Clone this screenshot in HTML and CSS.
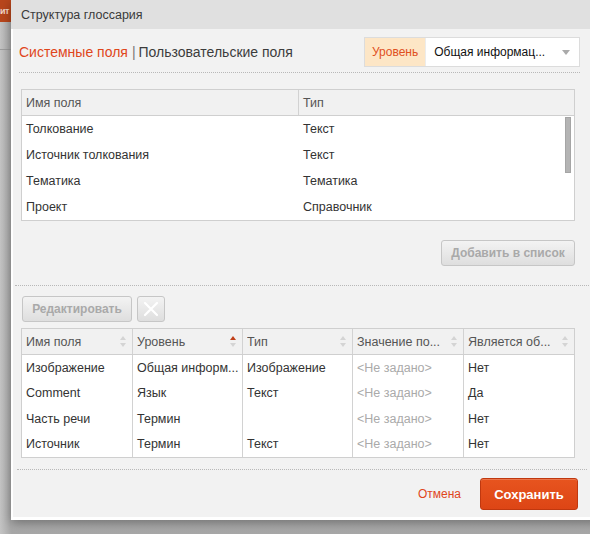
FILE: index.html
```html
<!DOCTYPE html>
<html lang="ru">
<head>
<meta charset="utf-8">
<title>Структура глоссария</title>
<link rel="stylesheet" href="styles.css">
</head>
<body>
<div class="app">
  <div class="app-bar"><span>ит</span></div>
  <div class="app-line"></div>
</div>

<div class="dialog">
  <div class="dialog-title">Структура глоссария</div>
  <div class="dialog-body">
    <div class="top-row">
      <div class="tabs">
        <span class="tab active">Системные поля</span><span class="sep">|</span><span class="tab">Пользовательские поля</span>
      </div>
      <div class="select">
        <span class="select-label">Уровень</span>
        <span class="select-value">Общая информац...</span>
        <span class="select-arrow"></span>
      </div>
    </div>

    <div class="grid grid-sys">
      <div class="grid-head">
        <div class="hcell c-name1">Имя поля</div>
        <div class="hcell c-type1">Тип</div>
      </div>
      <div class="grid-rows">
        <div class="row"><div class="cell c-name1">Толкование</div><div class="cell c-type1">Текст</div></div>
        <div class="row"><div class="cell c-name1">Источник толкования</div><div class="cell c-type1">Текст</div></div>
        <div class="row"><div class="cell c-name1">Тематика</div><div class="cell c-type1">Тематика</div></div>
        <div class="row"><div class="cell c-name1">Проект</div><div class="cell c-type1">Справочник</div></div>
        <div class="scrollbar"></div>
      </div>
    </div>

    <div class="add-row">
      <button class="btn btn-disabled">Добавить в список</button>
    </div>

    <div class="divider"></div>

    <div class="toolbar">
      <button class="btn btn-disabled btn-edit">Редактировать</button>
      <button class="btn btn-disabled btn-icon">
        <svg width="16" height="16" viewBox="0 0 16 16"><path d="M2 2 L14 14 M14 2 L2 14" stroke="#fff" stroke-width="2.2" stroke-linecap="round"/></svg>
      </button>
    </div>

    <div class="grid grid-user">
      <div class="grid-head">
        <div class="hcell"><span class="htext">Имя поля</span><span class="sort"></span></div>
        <div class="hcell"><span class="htext">Уровень</span><span class="sort asc"></span></div>
        <div class="hcell"><span class="htext">Тип</span><span class="sort"></span></div>
        <div class="hcell"><span class="htext">Значение по...</span><span class="sort"></span></div>
        <div class="hcell"><span class="htext">Является об...</span><span class="sort"></span></div>
      </div>
      <div class="grid-rows">
        <div class="row"><div class="cell">Изображение</div><div class="cell">Общая информ...</div><div class="cell">Изображение</div><div class="cell muted">&lt;Не задано&gt;</div><div class="cell">Нет</div></div>
        <div class="row"><div class="cell">Comment</div><div class="cell">Язык</div><div class="cell">Текст</div><div class="cell muted">&lt;Не задано&gt;</div><div class="cell">Да</div></div>
        <div class="row"><div class="cell">Часть речи</div><div class="cell">Термин</div><div class="cell"></div><div class="cell muted">&lt;Не задано&gt;</div><div class="cell">Нет</div></div>
        <div class="row"><div class="cell">Источник</div><div class="cell">Термин</div><div class="cell">Текст</div><div class="cell muted">&lt;Не задано&gt;</div><div class="cell">Нет</div></div>
      </div>
    </div>

    <div class="divider divider-bottom"></div>

    <div class="footer">
      <a class="link-cancel">Отмена</a>
      <button class="btn btn-primary">Сохранить</button>
    </div>
  </div>
</div>
</body>
</html>
```

FILE: styles.css
```css
* { box-sizing: border-box; }

html, body {
  margin: 0;
  padding: 0;
}

body {
  width: 590px;
  height: 534px;
  overflow: hidden;
  position: relative;
  background: linear-gradient(to bottom, #b9b9b9 0, #bdbdbd 480px, #a7a7a7 534px);
  font-family: "Liberation Sans", Arial, sans-serif;
  color: #333;
}

.app {
  width: 11px;
  height: 534px;
  background: linear-gradient(to right, #c4c4c4, #a9a9a9);
}

.app-bar {
  height: 22px;
  background: #b8461c;
  color: #f3d7c8;
  font-size: 9px;
  font-weight: bold;
  letter-spacing: -0.5px;
  overflow: hidden;
  display: flex;
  justify-content: flex-start;
  align-items: center;
  white-space: nowrap;
}

.app-line {
  height: 28px;
  border-bottom: 1px solid #9c9c9c;
}

/* Modal dialog floating over the page */
.dialog {
  position: absolute;
  left: 11px;
  top: 0;
  width: 590px;
  height: 520px;
  background: #fff;
  box-shadow: 0 3px 10px rgba(0, 0, 0, 0.35);
  display: flex;
  flex-direction: column;
}

.dialog-title {
  height: 29px;
  background: #e0e0e0;
  padding: 0 10px;
  font-size: 12.5px;
  line-height: 30px;
  color: #3a3a3a;
}

.dialog-body {
  flex: 1;
  margin: 0 0 3px 2px;
  background: #f2f2f2;
  padding: 0 0 0 6px;
}

/* Top row: tabs + level select */
.top-row {
  width: 561px;
  display: flex;
  justify-content: space-between;
  align-items: center;
  padding: 8px 0 5px;
  border-bottom: 1px dotted #b8b8b8;
}

.tabs {
  font-size: 14px;
  color: #3c3c3c;
  padding-bottom: 1px;
}

.tab.active { color: #e0461c; }

.sep {
  color: #777;
  margin: 0 3px 0 4px;
}

.select {
  display: flex;
  height: 30px;
  width: 216px;
  border: 1px solid #dcdcdc;
  background: #fff;
  font-size: 12px;
  align-items: stretch;
}

.select-label {
  background: #fde6c6;
  color: #e0501e;
  padding: 0 7px;
  display: flex;
  align-items: center;
  border-right: 1px solid #ececec;
}

.select-value {
  flex: 1;
  color: #111;
  display: flex;
  align-items: center;
  padding-left: 8px;
}

.select-arrow {
  width: 24px;
  position: relative;
}

.select-arrow::after {
  content: "";
  position: absolute;
  left: 7px;
  top: 12px;
  border-left: 4px solid transparent;
  border-right: 4px solid transparent;
  border-top: 5px solid #aaa;
}

/* Grids */
.grid {
  margin-left: 2px;
  width: 554px;
  border: 1px solid #cfcfcf;
  background: #fff;
  font-size: 12.5px;
}

.grid-sys { margin-top: 16px; }

.grid-head {
  display: flex;
  height: 26px;
  background: #f1f1f1;
  border-bottom: 1px solid #cfcfcf;
  color: #555;
}

.hcell {
  display: flex;
  align-items: center;
  padding: 0 4px;
  border-right: 1px solid #d2d2d2;
}

.hcell:last-child { border-right: 0; }

.grid-rows {
  position: relative;
}

.row {
  display: flex;
  height: 26px;
}

.cell {
  display: flex;
  align-items: center;
  padding: 0 4px;
  color: #333;
  white-space: nowrap;
  overflow: hidden;
}

.c-name1 { width: 277px; }
.c-type1 { flex: 1; }

.grid-sys .grid-rows .row:last-of-type { height: 25px; }

.scrollbar {
  position: absolute;
  right: 3px;
  top: 1px;
  width: 6px;
  height: 56px;
  background: #b4b4b4;
  border: 1px solid #a5a5a5;
}

.grid-user {
  margin-top: 6px;
}

.grid-user .hcell,
.grid-user .cell {
  width: 110px;
  border-right: 1px solid #d2d2d2;
}

.grid-user .hcell:nth-child(1),
.grid-user .cell:nth-child(1) { width: 111px; }
.grid-user .hcell:nth-child(4),
.grid-user .cell:nth-child(4) { width: 111px; }
.grid-user .hcell:last-child,
.grid-user .cell:last-child { flex: 1; border-right: 0; }

.grid-user .row { height: 25.5px; }

.htext {
  flex: 1;
  white-space: nowrap;
  overflow: hidden;
}

.sort {
  width: 7px;
  height: 11px;
  position: relative;
  margin-right: 1px;
}

.sort::before,
.sort::after {
  content: "";
  position: absolute;
  left: 0;
  border-left: 3px solid transparent;
  border-right: 3px solid transparent;
}

.sort::before {
  top: 0;
  border-bottom: 4px solid #d4d4d4;
}

.sort::after {
  bottom: 0;
  border-top: 4px solid #d4d4d4;
}

.sort.asc::before { border-bottom-color: #c0401a; }

.muted { color: #aaa; }

/* Buttons */
.btn {
  font-family: "Liberation Sans", Arial, sans-serif;
  font-size: 12px;
  font-weight: bold;
  border-radius: 3px;
  cursor: default;
  padding: 0 10px;
}

.btn-disabled {
  height: 26px;
  color: #a9a9a9;
  border: 1px solid #c6c6c6;
  background: linear-gradient(to bottom, #f3f3f3, #dedede);
}

.btn-edit { width: 110px; padding: 0; }

.btn-icon {
  width: 28px;
  padding: 0;
  display: flex;
  align-items: center;
  justify-content: center;
}

.add-row {
  width: 556px;
  display: flex;
  justify-content: flex-end;
  margin-top: 19px;
}

.add-row .btn { width: 134px; padding: 0; }

.divider {
  margin: 19px 0 0 -4px;
  border-top: 1px dotted #b8b8b8;
}

.toolbar {
  display: flex;
  gap: 5px;
  margin: 10px 0 0 3px;
}

.divider-bottom {
  margin: 11px 0 0 -2px;
  width: 570px;
}

.footer {
  width: 559px;
  display: flex;
  justify-content: flex-end;
  align-items: center;
  gap: 19px;
  margin-top: 8px;
}

.link-cancel {
  color: #e0461c;
  font-size: 12px;
}

.btn-primary {
  height: 32px;
  width: 98px;
  padding: 0;
  color: #fff;
  font-size: 13px;
  border: 1px solid #c0380f;
  background: linear-gradient(to bottom, #e7541f, #dd4515);
  box-shadow: inset 0 1px 0 rgba(255, 255, 255, 0.2);
}
```
